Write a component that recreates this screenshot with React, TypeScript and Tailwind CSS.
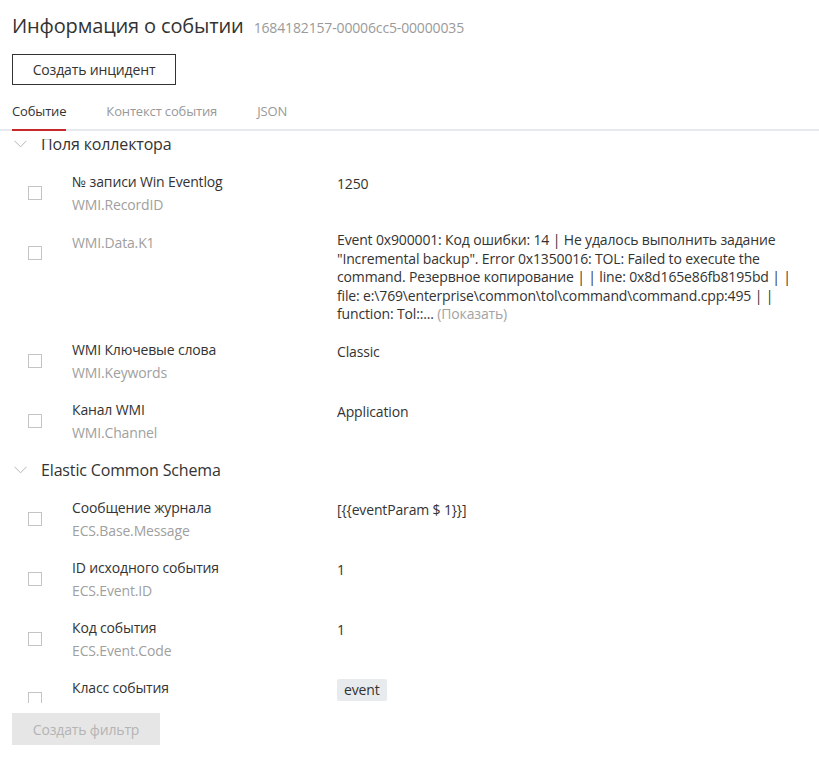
import { useState } from "react";

type Field = {
    label?: string;
    key: string;
    value: React.ReactNode;
    long?: boolean;
};

const collectorFields: Field[] = [
    { label: "№ записи Win Eventlog", key: "WMI.RecordID", value: "1250" },
    {
        key: "WMI.Data.K1",
        long: true,
        value: (
            <>
                Event 0x900001: Код ошибки: 14 | Не удалось выполнить задание "Incremental backup". Error 0x1350016:
                TOL: Failed to execute the command. Резервное копирование | | line: 0x8d165e86fb8195bd | | file:
                e:\769\enterprise\common\tol\command\command.cpp:495 | | function: Tol::...{" "}
                <span className="text-[#a3a3a3]">(Показать)</span>
            </>
        ),
    },
    { label: "WMI Ключевые слова", key: "WMI.Keywords", value: "Classic" },
    { label: "Канал WMI", key: "WMI.Channel", value: "Application" },
];

const ecsFields: Field[] = [
    { label: "Сообщение журнала", key: "ECS.Base.Message", value: "[{{eventParam $ 1}}]" },
    { label: "ID исходного события", key: "ECS.Event.ID", value: "1" },
    { label: "Код события", key: "ECS.Event.Code", value: "1" },
    {
        label: "Класс события",
        key: "ECS.Event.Class",
        value: <span className="inline-block bg-[#e8ebee] px-[7px] leading-[22px] rounded-[2px]">event</span>,
    },
];

function Chevron() {
    return (
        <svg width="13" height="8" viewBox="0 0 13 8" fill="none" className="shrink-0">
            <path d="M0.5 0.8 L6.5 6.8 L12.5 0.8" stroke="#b5b5b5" strokeWidth="1" />
        </svg>
    );
}

function Section({ title, fields }: { title: string; fields: Field[] }) {
    return (
        <div>
            <div className="h-[38px] flex items-center pl-[14px] gap-[14px]">
                <Chevron />
                <span className="text-[16px] text-[#333]">{title}</span>
            </div>
            {fields.map((f) => (
                <FieldRow key={f.key} field={f} />
            ))}
        </div>
    );
}

function FieldRow({ field }: { field: Field }) {
    const [checked, setChecked] = useState(false);
    return (
        <div className="flex py-[7px]">
            <div className="w-[72px] shrink-0 pl-[28px] pt-[16px]">
                <button
                    onClick={() => setChecked(!checked)}
                    className="block w-[14px] h-[14px] border border-[#c4c4c4] bg-white"
                />
            </div>
            <div className="w-[265px] shrink-0 text-[14px] leading-[23px]">
                {field.label && <div className="text-[#333]">{field.label}</div>}
                <div className={field.label ? "text-[#a0a0a0]" : "text-[#a0a0a0] pt-[1px]"}>{field.key}</div>
            </div>
            <div
                className={
                    field.long
                        ? "w-[470px] shrink-0 text-[14px] leading-[18.5px] text-[#333] pt-[1px]"
                        : "w-[470px] shrink-0 text-[14px] leading-[23px] text-[#333] pt-[2px]"
                }
            >
                {field.value}
            </div>
        </div>
    );
}

export default function App() {
    const [tab, setTab] = useState(0);
    const tabs = ["Событие", "Контекст события", "JSON"];

    return (
        <div className="w-[819px] h-[761px] bg-white flex flex-col font-['Open_Sans',sans-serif] tracking-[-0.15px] text-[#333]">
            {/* Header */}
            <div className="flex items-baseline gap-[10px] px-[12px] pt-[11px]">
                <h1 className="text-[20px] leading-[30px] text-[#333]">Информация о событии</h1>
                <span className="text-[14px] text-[#9a9a9a]">1684182157-00006cc5-00000035</span>
            </div>

            <div className="px-[12px] pt-[13px]">
                <button className="w-[164px] h-[31px] border border-[#333] text-[14px] text-[#333] bg-white">
                    Создать инцидент
                </button>
            </div>

            {/* Tabs */}
            <div className="flex gap-[40px] px-[12px] mt-[16px] border-b-2 border-[#e6e9ed]">
                {tabs.map((t, i) => (
                    <button
                        key={t}
                        onClick={() => setTab(i)}
                        className={
                            i === tab
                                ? "text-[13px] leading-[20px] pb-[8px] -mb-[2px] border-b-2 border-[#c8282a] text-[#333]"
                                : "text-[13px] leading-[20px] pb-[8px] -mb-[2px] border-b-2 border-transparent text-[#999]"
                        }
                    >
                        {t}
                    </button>
                ))}
            </div>

            {/* Scrollable fields (scrolled slightly down) */}
            <div className="mt-[8px] h-[564px] overflow-hidden">
                <div className="-mt-[14px]">
                    <Section title="Поля коллектора" fields={collectorFields} />
                    <Section title="Elastic Common Schema" fields={ecsFields} />
                </div>
            </div>

            <div className="px-[12px] pt-[10px]">
                <button disabled className="w-[148px] h-[32px] bg-[#e6e6e6] text-[14px] text-[#b4b4b4]">
                    Создать фильтр
                </button>
            </div>
        </div>
    );
}
